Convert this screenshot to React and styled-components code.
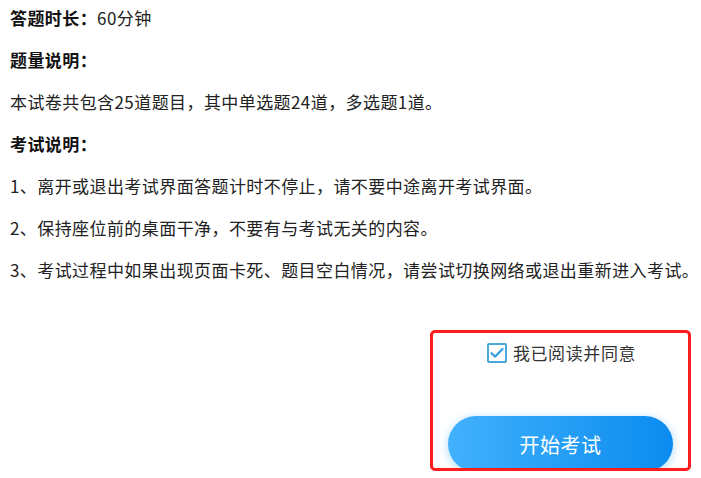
import React, { useState } from "react";
import styled, { createGlobalStyle } from "styled-components";

const GlobalStyle = createGlobalStyle`
  html, body {
    margin: 0;
    padding: 0;
    background: #ffffff;
  }
  body {
    font-family: "Noto Sans CJK SC", "Noto Sans", "Liberation Sans", sans-serif;
    color: #333333;
  }
`;

const Page = styled.div`
  width: 701px;
  box-sizing: border-box;
  padding: 6px 10px 0 10px;
  display: flex;
  flex-direction: column;
`;

const Line = styled.p`
  margin: 0 0 18px 0;
  font-size: 17px;
  letter-spacing: 0.42px;
  line-height: 24px;
  white-space: nowrap;
  color: #222222;
`;

const Label = styled.span`
  font-weight: bold;
  color: #111111;
`;

const Footer = styled.div`
  display: flex;
  justify-content: flex-end;
  margin-top: 30px;
`;

const AgreeBox = styled.div`
  position: relative;
  width: 261px;
  height: 141px;
  box-sizing: border-box;
  padding: 13px 0 0 0;
  display: flex;
  flex-direction: column;
  align-items: center;

  &::after {
    content: "";
    position: absolute;
    inset: 0;
    border: 3px solid #ff1c1c;
    border-radius: 5px;
    pointer-events: none;
  }
`;

const AgreeRow = styled.label`
  display: flex;
  align-items: center;
  gap: 6px;
  font-size: 17px;
  letter-spacing: 0.6px;
  line-height: 20px;
  color: #333333;
  cursor: pointer;
  margin-left: 2px;
`;

const Check = styled.span`
  width: 20px;
  height: 20px;
  box-sizing: border-box;
  border: 2px solid ${(p) => (p.$on ? "#4aa8dc" : "#bbbbbb")};
  border-radius: 2px;
  display: flex;
  align-items: center;
  justify-content: center;
  background: #ffffff;
`;

const StartButton = styled.button`
  margin-top: auto;
  width: 225px;
  height: 56px;
  border: none;
  border-radius: 28px;
  background: linear-gradient(90deg, #42b1fd 0%, #0a8cef 100%);
  box-shadow: 0 2px 10px rgba(64, 170, 250, 0.45);
  color: #ffffff;
  font-family: inherit;
  font-size: 20px;
  letter-spacing: 0.5px;
  cursor: pointer;
  padding: 0;
  position: relative;
  top: 1px;
`;

export default function App() {
  const [agreed, setAgreed] = useState(true);

  return (
    <>
      <GlobalStyle />
      <Page>
        <Line>
          <Label>答题时长：</Label>60分钟
        </Line>
        <Line>
          <Label>题量说明：</Label>
        </Line>
        <Line>本试卷共包含25道题目，其中单选题24道，多选题1道。</Line>
        <Line>
          <Label>考试说明：</Label>
        </Line>
        <Line>1、离开或退出考试界面答题计时不停止，请不要中途离开考试界面。</Line>
        <Line>2、保持座位前的桌面干净，不要有与考试无关的内容。</Line>
        <Line>3、考试过程中如果出现页面卡死、题目空白情况，请尝试切换网络或退出重新进入考试。</Line>

        <Footer>
          <AgreeBox>
            <AgreeRow onClick={() => setAgreed(!agreed)}>
              <Check $on={agreed}>
                {agreed && (
                  <svg width="14" height="12" viewBox="0 0 14 12">
                    <path
                      d="M1.5 6.2 L5.2 9.6 L12.5 2"
                      fill="none"
                      stroke="#2f9ee0"
                      strokeWidth="2.2"
                      strokeLinecap="round"
                      strokeLinejoin="round"
                    />
                  </svg>
                )}
              </Check>
              我已阅读并同意
            </AgreeRow>
            <StartButton>开始考试</StartButton>
          </AgreeBox>
        </Footer>
      </Page>
    </>
  );
}
